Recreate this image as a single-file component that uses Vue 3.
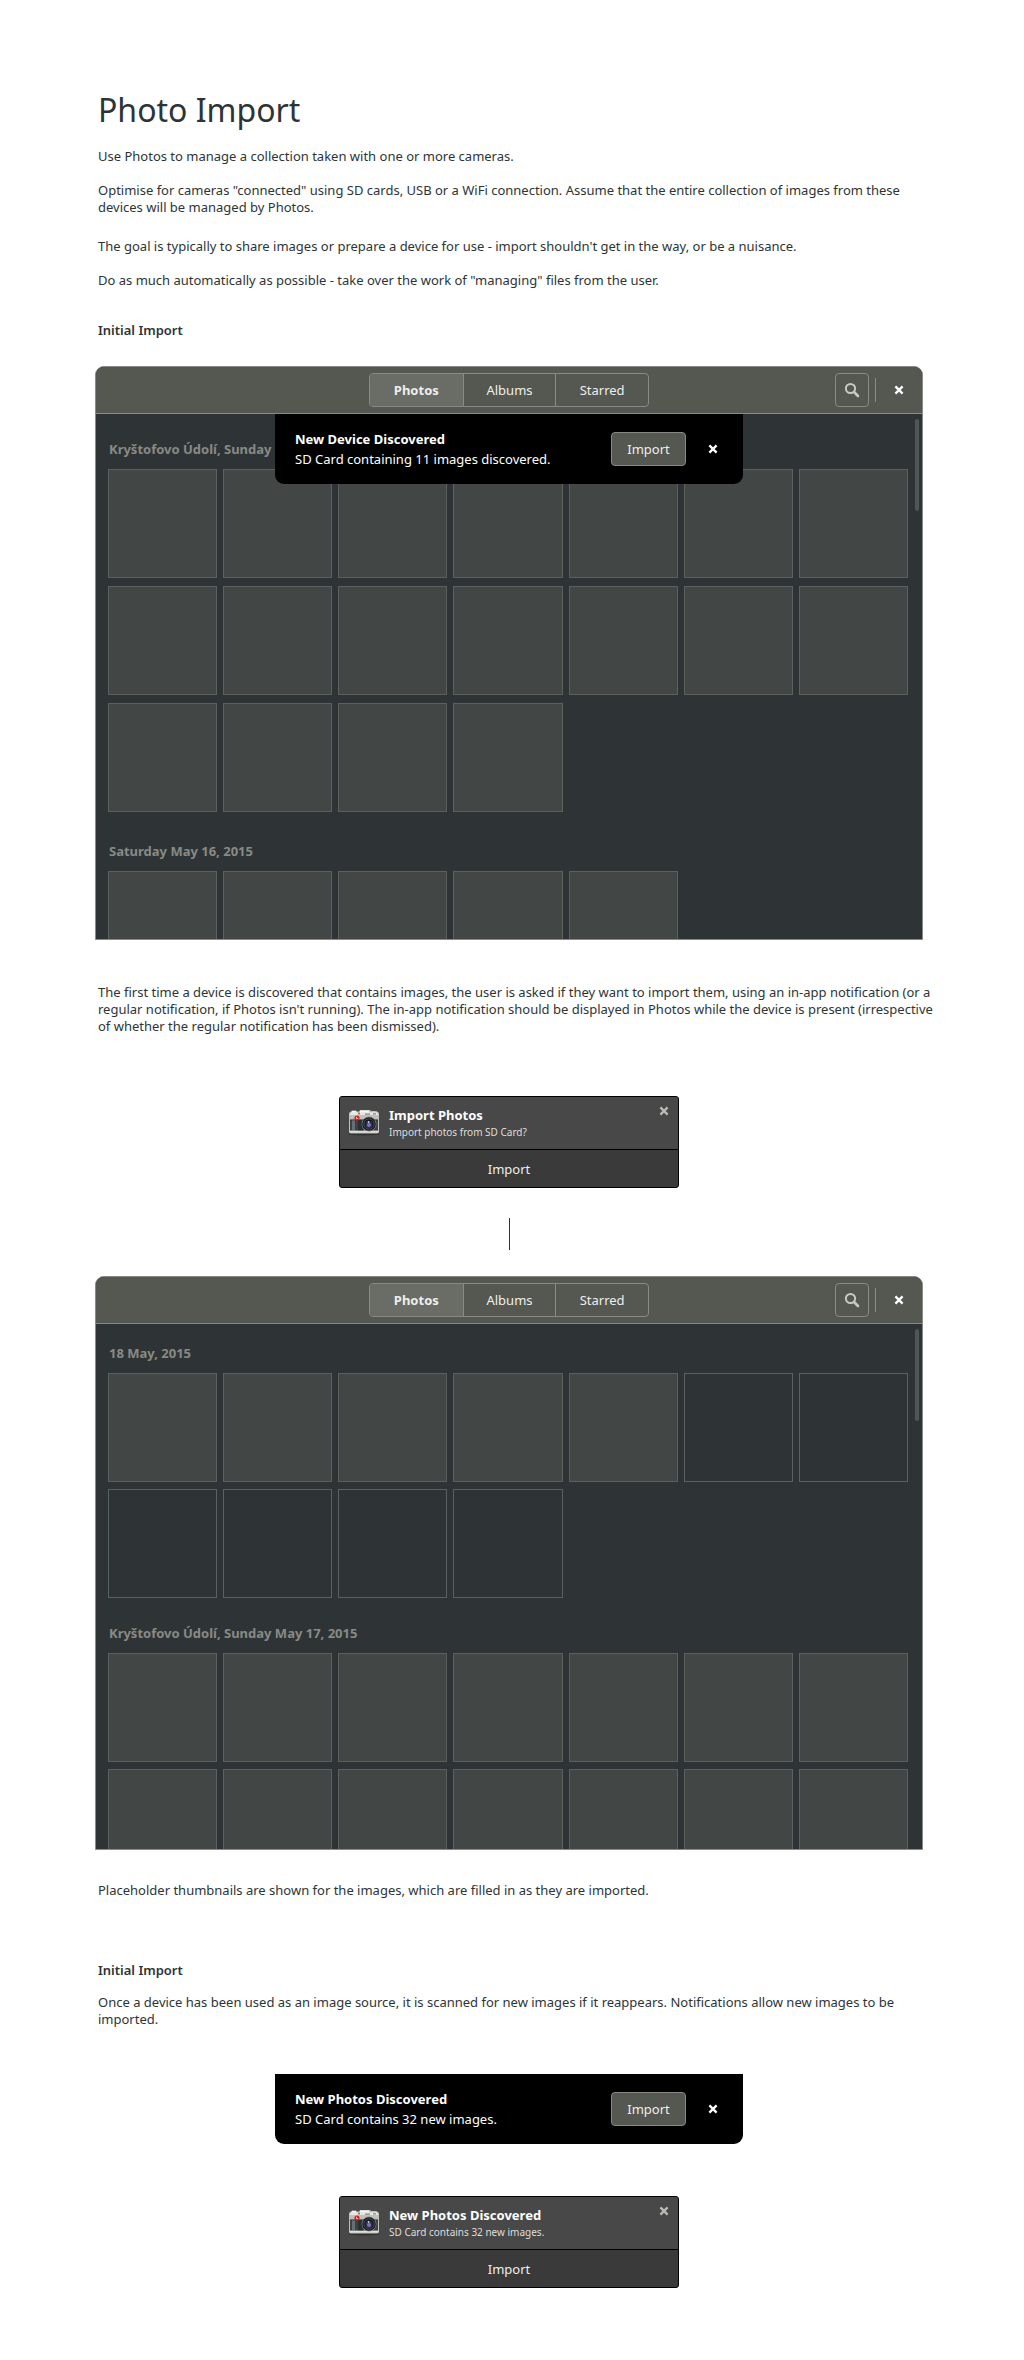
<script setup>
import { h } from 'vue'

const introText = [
  'Use Photos to manage a collection taken with one or more cameras.',
  'Optimise for cameras "connected" using SD cards, USB or a WiFi connection. Assume that the entire collection of images from these devices will be managed by Photos.',
  'The goal is typically to share images or prepare a device for use - import shouldn\'t get in the way, or be a nuisance.',
  'Do as much automatically as possible - take over the work of "managing" files from the user.'
]

const tabs = ['Photos', 'Albums', 'Starred']

const fill = (count, pending = 0) =>
  Array.from({ length: count + pending }, (_, i) => i >= count)

const windows = {
  discovered: [
    { title: 'Kryštofovo Údolí, Sunday', tiles: fill(18) },
    { title: 'Saturday May 16, 2015', tiles: fill(5) }
  ],
  importing: [
    { title: '18 May, 2015', tiles: fill(5, 6) },
    { title: 'Kryštofovo Údolí, Sunday May 17, 2015', tiles: fill(14) }
  ]
}

const CloseIcon = () =>
  h('svg', { width: 10, height: 10, viewBox: '0 0 10 10', 'aria-hidden': 'true' }, [
    h('path', { d: 'M1.4 1.4 8.6 8.6M8.6 1.4 1.4 8.6', stroke: 'currentColor', 'stroke-width': 2.3, fill: 'none' })
  ])

const CameraIcon = () =>
  h('svg', { width: 32, height: 27, viewBox: '0 0 32 27', 'aria-hidden': 'true' }, [
    h('ellipse', { cx: 16, cy: 25, rx: 15.5, ry: 1.5, fill: '#222222', opacity: 0.6 }),
    h('path', { d: 'M1 5Q1 3 3 2.6L4 1.6H8L9 2.4H11L12 1H22L23 2H28L30 3Q31 3.6 31 5V22.5Q31 24.6 29 24.6H3Q1 24.6 1 22.5Z', fill: '#bfc0bc' }),
    h('path', { d: 'M3 3.2H29L30.4 6H1.6Z', fill: '#e6e6e2' }),
    h('path', { d: 'M12 1.6H21V3.4H12ZM4 2H8V3.4H4Z', fill: '#f6f6f3' }),
    h('path', { d: 'M17 4.4H22V5.8H17ZM10 3.6H12V5.6H10ZM25 4.2H28V5.4H25Z', fill: '#85877f' }),
    h('path', { d: 'M2 11H30V21.8H2Z', fill: '#3c4345' }),
    h('path', { d: 'M4 11H7V21.8H4Z', fill: '#667072' }),
    h('path', { d: 'M10 11H15V21.8H10Z', fill: '#2b3032' }),
    h('path', { d: 'M2 10.4H30V11.2H2Z', fill: '#1f2223' }),
    h('path', { d: 'M1.6 21.8H30.4V23.4H1.6Z', fill: '#e0e0dc' }),
    h('circle', { cx: 9, cy: 9, r: 2.6, fill: '#d81e1e' }),
    h('path', { d: 'M8.5 7.8V9.6H10.2', stroke: '#ffe0e0', 'stroke-width': 0.8, fill: 'none' }),
    h('circle', { cx: 21, cy: 15, r: 7.4, fill: '#8c8f8d' }),
    h('circle', { cx: 21, cy: 15, r: 6.8, fill: '#141619' }),
    h('circle', { cx: 21, cy: 15, r: 5.2, fill: 'none', stroke: '#4b4f55', 'stroke-width': 1 }),
    h('circle', { cx: 21, cy: 15.4, r: 3.6, fill: '#2f2c63' }),
    h('circle', { cx: 21, cy: 16, r: 2, fill: '#7a74b4' }),
    h('circle', { cx: 20.6, cy: 13, r: 0.9, fill: '#c4dfd2' })
  ])

const Toast = (props) =>
  h('div', { class: 'toast', role: 'status' }, [
    h('div', { class: 'toast-text' }, [h('strong', props.title), h('span', props.detail)]),
    h('button', { class: 'toast-action', type: 'button' }, 'Import'),
    h('button', { class: 'icon-close', type: 'button', 'aria-label': 'Dismiss' }, [h(CloseIcon)])
  ])
Toast.props = ['title', 'detail']

const Notice = (props) =>
  h('section', { class: 'notice' }, [
    h('div', { class: 'notice-main' }, [
      h(CameraIcon),
      h('div', { class: 'notice-text' }, [h('strong', props.title), h('span', props.detail)]),
      h('button', { class: 'notice-close', type: 'button', 'aria-label': 'Close' }, [h(CloseIcon)])
    ]),
    h('button', { class: 'notice-action', type: 'button' }, 'Import')
  ])
Notice.props = ['title', 'detail']
</script>

<template>
  <main class="page">
    <header class="intro">
      <h1>Photo Import</h1>
      <p v-for="text in introText" :key="text">{{ text }}</p>
    </header>

    <h2>Initial Import</h2>

    <template v-for="(sections, name) in windows" :key="name">
      <section class="window" :class="name">
        <div class="titlebar">
          <nav class="tabs" aria-label="View">
            <button v-for="(tab, i) in tabs" :key="tab" type="button" :class="{ active: i === 0 }">{{ tab }}</button>
          </nav>
          <div class="tools">
            <button class="search" type="button" aria-label="Search">
              <svg width="16" height="16" viewBox="0 0 16 16" aria-hidden="true">
                <circle cx="6.5" cy="6.5" r="4.6" fill="none" stroke="currentColor" stroke-width="2" />
                <path d="M10 10 14 14" stroke="currentColor" stroke-width="2.6" stroke-linecap="round" />
              </svg>
            </button>
            <span class="divider"></span>
            <button class="icon-close" type="button" aria-label="Close window"><CloseIcon /></button>
          </div>
        </div>
        <div class="content">
          <section v-for="section in sections" :key="section.title" class="group">
            <h3>{{ section.title }}</h3>
            <div class="grid">
              <div v-for="(pending, i) in section.tiles" :key="i" class="tile" :class="{ pending }"></div>
            </div>
          </section>
          <span class="scrollbar"></span>
          <Toast v-if="name === 'discovered'" class="overlay" title="New Device Discovered" detail="SD Card containing 11 images discovered." />
        </div>
      </section>

      <template v-if="name === 'discovered'">
        <p class="after-window">
          The first time a device is discovered that contains images, the user is asked if they want to import them, using an in-app notification (or a regular notification, if Photos isn't running). The in-app notification should be displayed in Photos while the device is present (irrespective of whether the regular notification has been dismissed).
        </p>
        <Notice title="Import Photos" detail="Import photos from SD Card?" />
        <div class="connector"></div>
      </template>
    </template>

    <p class="placeholder-note">Placeholder thumbnails are shown for the images, which are filled in as they are imported.</p>

    <h2>Initial Import</h2>
    <p class="rescan-note">
      Once a device has been used as an image source, it is scanned for new images if it reappears. Notifications allow new images to be imported.
    </p>

    <Toast title="New Photos Discovered" detail="SD Card contains 32 new images." />
    <Notice class="last-notice" title="New Photos Discovered" detail="SD Card contains 32 new images." />
  </main>
</template>

<style>
body {
  margin: 0;
  background: #fff;
}

.page,
.page button {
  font-family: "Noto Sans", "Open Sans", sans-serif;
}

.page button {
  margin: 0;
  padding: 0;
  box-sizing: border-box;
  border: 0;
  background: none;
  color: inherit;
  font-size: 13px;
}

.page svg {
  display: block;
  flex: none;
}

.page .icon-close {
  display: grid;
  place-items: center;
  width: 24px;
  height: 24px;
  color: #fff;
}

.toast {
  box-sizing: border-box;
  display: flex;
  align-items: center;
  width: 468px;
  height: 70px;
  margin: 0 auto;
  padding: 0 18px 0 20px;
  border-radius: 0 0 9px 9px;
  background: #000;
  color: #fff;
}

.toast-text {
  display: flex;
  flex-direction: column;
  flex: 1;
  font-size: 13px;
  line-height: 20px;
}

.page .toast-action {
  width: 75px;
  height: 34px;
  margin-right: 15px;
  border: 1px solid #888a85;
  border-radius: 4px;
  background: #555751;
  color: #eeeeec;
}

.notice {
  box-sizing: border-box;
  width: 340px;
  margin: 0 auto;
  border: 1px solid #000;
  border-radius: 3px;
  background: #3a3a3a;
  color: #fff;
  overflow: hidden;
}

.notice-main {
  display: flex;
  align-items: flex-start;
  gap: 9px;
  height: 52px;
  padding: 0 9px 0 8px;
  border-bottom: 1px solid #000;
  background: #484848;
}

.notice-main > svg {
  margin-top: 12px;
}

.notice-text {
  display: flex;
  flex-direction: column;
  flex: 1;
  padding-top: 8px;
  font-size: 13px;
  line-height: 20px;
}

.notice-text span {
  font-size: 10px;
  line-height: 14px;
  color: #dededc;
}

.page .notice-close {
  margin-top: 9px;
  color: #babdb6;
}

.page .notice-action {
  width: 100%;
  height: 37px;
  display: block;
  color: #eeeeec;
}
</style>

<style scoped>
.page {
  box-sizing: border-box;
  padding: 84px 101px 72px 95px;
  color: #2e3436;
  font-size: 13px;
  line-height: 17px;
}

h1,
h2,
h3,
p {
  margin: 0;
}

h1,
h2,
p {
  padding-left: 3px;
}

h1 {
  padding-top: 2px;
  margin-bottom: 14px;
  font-size: 32px;
  font-weight: 400;
  line-height: 48px;
}

.intro p {
  margin-bottom: 17px;
}

.intro p:nth-of-type(2) {
  margin-bottom: 22px;
}

h2 {
  margin: 33px 0 27px;
  font-size: 13px;
  font-weight: 600;
  line-height: 17px;
}

.window {
  box-sizing: border-box;
  height: 574px;
  display: flex;
  flex-direction: column;
  border: 1px solid #888a85;
  border-radius: 9px 9px 0 0;
  background: #2e3436;
  overflow: hidden;
}

.titlebar {
  display: grid;
  grid-template-columns: 1fr 280px 1fr;
  align-items: center;
  height: 46px;
  flex: none;
  border-bottom: 1px solid #888a85;
  background: #555751;
}

.tabs {
  grid-column: 2;
  display: grid;
  grid-template-columns: repeat(3, 1fr);
  box-sizing: border-box;
  height: 34px;
  border: 1px solid #888a85;
  border-radius: 4px;
  overflow: hidden;
}

.tabs button {
  color: #eeeeec;
}

.tabs button + button {
  border-left: 1px solid #888a85;
}

.tabs .active {
  background: #6a6c66;
  font-weight: 700;
}

.tools {
  display: flex;
  align-items: center;
  justify-content: flex-end;
  padding-right: 11px;
}

.page .search {
  display: grid;
  place-items: center;
  width: 34px;
  height: 34px;
  border: 1px solid #888a85;
  border-radius: 4px;
  color: #c8c9c6;
}

.divider {
  width: 1px;
  height: 24px;
  margin: 0 11px 0 6px;
  background: #888a85;
}

.content {
  position: relative;
  flex: 1;
  min-height: 0;
  padding: 28px 14px 0 12px;
  overflow: hidden;
}

.group {
  margin-bottom: 28px;
}

h3 {
  padding-left: 1px;
  margin-bottom: 12px;
  color: #888a85;
  font-size: 13px;
  line-height: 15px;
}

.grid {
  display: grid;
  grid-template-columns: repeat(7, 1fr);
  gap: 7px 6px;
}

.discovered .group {
  margin-bottom: 32px;
}

.discovered .grid {
  row-gap: 8px;
}

.importing .content {
  padding-top: 22px;
}

.tile {
  box-sizing: border-box;
  height: 109px;
  border: 1px solid #5c605e;
  background: #424644;
}

.tile.pending {
  background: none;
}

.scrollbar {
  position: absolute;
  top: 5px;
  right: 3px;
  width: 4px;
  height: 92px;
  border-radius: 2px;
  background: #505557;
}

.overlay {
  position: absolute;
  top: 0;
  left: 50%;
  transform: translateX(-50%);
}

.after-window {
  margin: 44px -15px 61px 0;
}

.connector {
  width: 1px;
  height: 32px;
  margin: 30px auto 26px;
  background: #2e3436;
}

.placeholder-note {
  margin-top: 32px;
}

.placeholder-note + h2 {
  margin: 63px 0 15px;
}

.rescan-note {
  margin-bottom: 46px;
}

.last-notice {
  margin-top: 52px;
}
</style>
